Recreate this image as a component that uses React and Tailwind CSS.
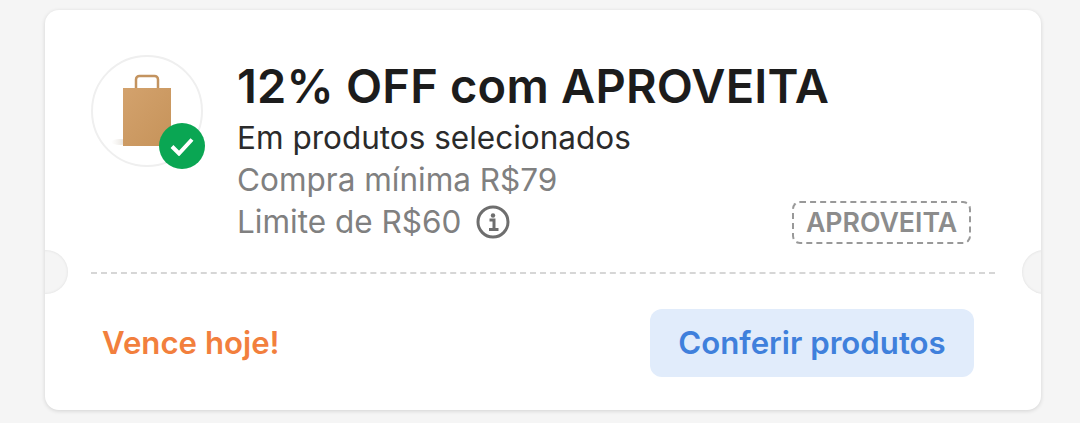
import React from "react";

const font = { fontFamily: '"Inter", "Open Sans", sans-serif' };

const BagBadge = () => (
  <div className="relative h-[112px] w-[112px] shrink-0 rounded-full border-2 border-[#efefef] bg-white">
    <svg className="absolute left-0 top-0" width="108" height="108" viewBox="0 0 108 108">
      <defs>
        <linearGradient id="kraft" x1="0" y1="0" x2="1" y2="1">
          <stop offset="0" stopColor="#d3a26d" />
          <stop offset="1" stopColor="#c6935a" />
        </linearGradient>
        <linearGradient id="floor" x1="0" y1="0" x2="1" y2="0">
          <stop offset="0" stopColor="#e8e4de" stopOpacity="0" />
          <stop offset="1" stopColor="#d9d3ca" />
        </linearGradient>
      </defs>
      <ellipse cx="27" cy="85" rx="9" ry="3" fill="url(#floor)" />
      <path d="M43 31v-8.500c0-2 1.500-3.500 3.500-3.500h15c2 0 3.500 1.500 3.500 3.500V31" fill="none" stroke="#c3935f" strokeWidth="2.500" />
      <path d="M30 31h48v58H30z" fill="url(#kraft)" />
    </svg>
    <div className="absolute left-[66px] top-[66px] flex h-[46px] w-[46px] items-center justify-center rounded-full bg-[#0aa653]">
      <svg width="26" height="20" viewBox="0 0 26 20" fill="none">
        <path d="M3 10.500l7 7L23 3.500" stroke="#fff" strokeWidth="4" />
      </svg>
    </div>
  </div>
);

const InfoIcon = () => (
  <svg width="34" height="34" viewBox="0 0 34 34" fill="none">
    <circle cx="17" cy="17" r="15" stroke="#6e6e6e" strokeWidth="3" />
    <circle cx="17" cy="10.500" r="2.200" fill="#6e6e6e" />
    <path d="M13.500 15H18v9M13 24.500h9.500" stroke="#6e6e6e" strokeWidth="3" />
  </svg>
);

export default function App() {
  return (
    <div className="h-[423px] w-[1080px] overflow-hidden bg-[#f5f5f5] pl-[45px] pt-[10px]" style={font}>
      <div className="relative h-[400px] w-[996px] overflow-hidden rounded-[14px] bg-white shadow-[0_1px_4px_rgba(0,0,0,0.14)]">
        <div className="absolute -left-[21px] top-[240px] h-[44px] w-[44px] rounded-full bg-[#f5f5f5] shadow-[inset_0_0_3px_rgba(0,0,0,0.1)]" />
        <div className="absolute -right-[25px] top-[240px] h-[44px] w-[44px] rounded-full bg-[#f5f5f5] shadow-[inset_0_0_3px_rgba(0,0,0,0.1)]" />

        <div className="flex h-[262px] gap-[34px] pl-[46px] pr-[70px] pt-[45px]">
          <BagBadge />
          <div className="flex-1 pt-[3px]">
            <h1 className="whitespace-nowrap text-[47px] font-semibold leading-[56px] tracking-[0.2px] text-[#1c1c1c]">12% OFF com APROVEITA</h1>
            <p className="mt-[3px] text-[31.500px] leading-[42px] text-[#2b2b2b]">Em produtos selecionados</p>
            <p className="text-[31.500px] leading-[42px] text-[#808080]">Compra mínima R$79</p>
            <div className="flex h-[42px] items-center justify-between text-[31.500px] text-[#808080]">
              <div className="flex items-center gap-[15px]">
                <span>Limite de R$60</span>
                <InfoIcon />
              </div>
              <div className="flex h-[43px] w-[179px] items-center justify-center rounded-[8px] border-2 border-dashed border-[#999] text-[26.700px] font-semibold text-[#8c8c8c]">
                APROVEITA
              </div>
            </div>
          </div>
        </div>

        <div className="mx-[46px] border-t-2 border-dashed border-[#d6d6d6]" />

        <div className="flex items-center justify-between pl-[57px] pr-[67px] pt-[35px]">
          <span className="text-[31.200px] font-semibold text-[#f27f3d]">Vence hoje!</span>
          <button className="flex h-[68px] w-[324px] items-center justify-center rounded-[12px] bg-[#e1ecfb] text-[31.200px] font-semibold text-[#3f80dc]">
            Conferir produtos
          </button>
        </div>
      </div>
    </div>
  );
}
